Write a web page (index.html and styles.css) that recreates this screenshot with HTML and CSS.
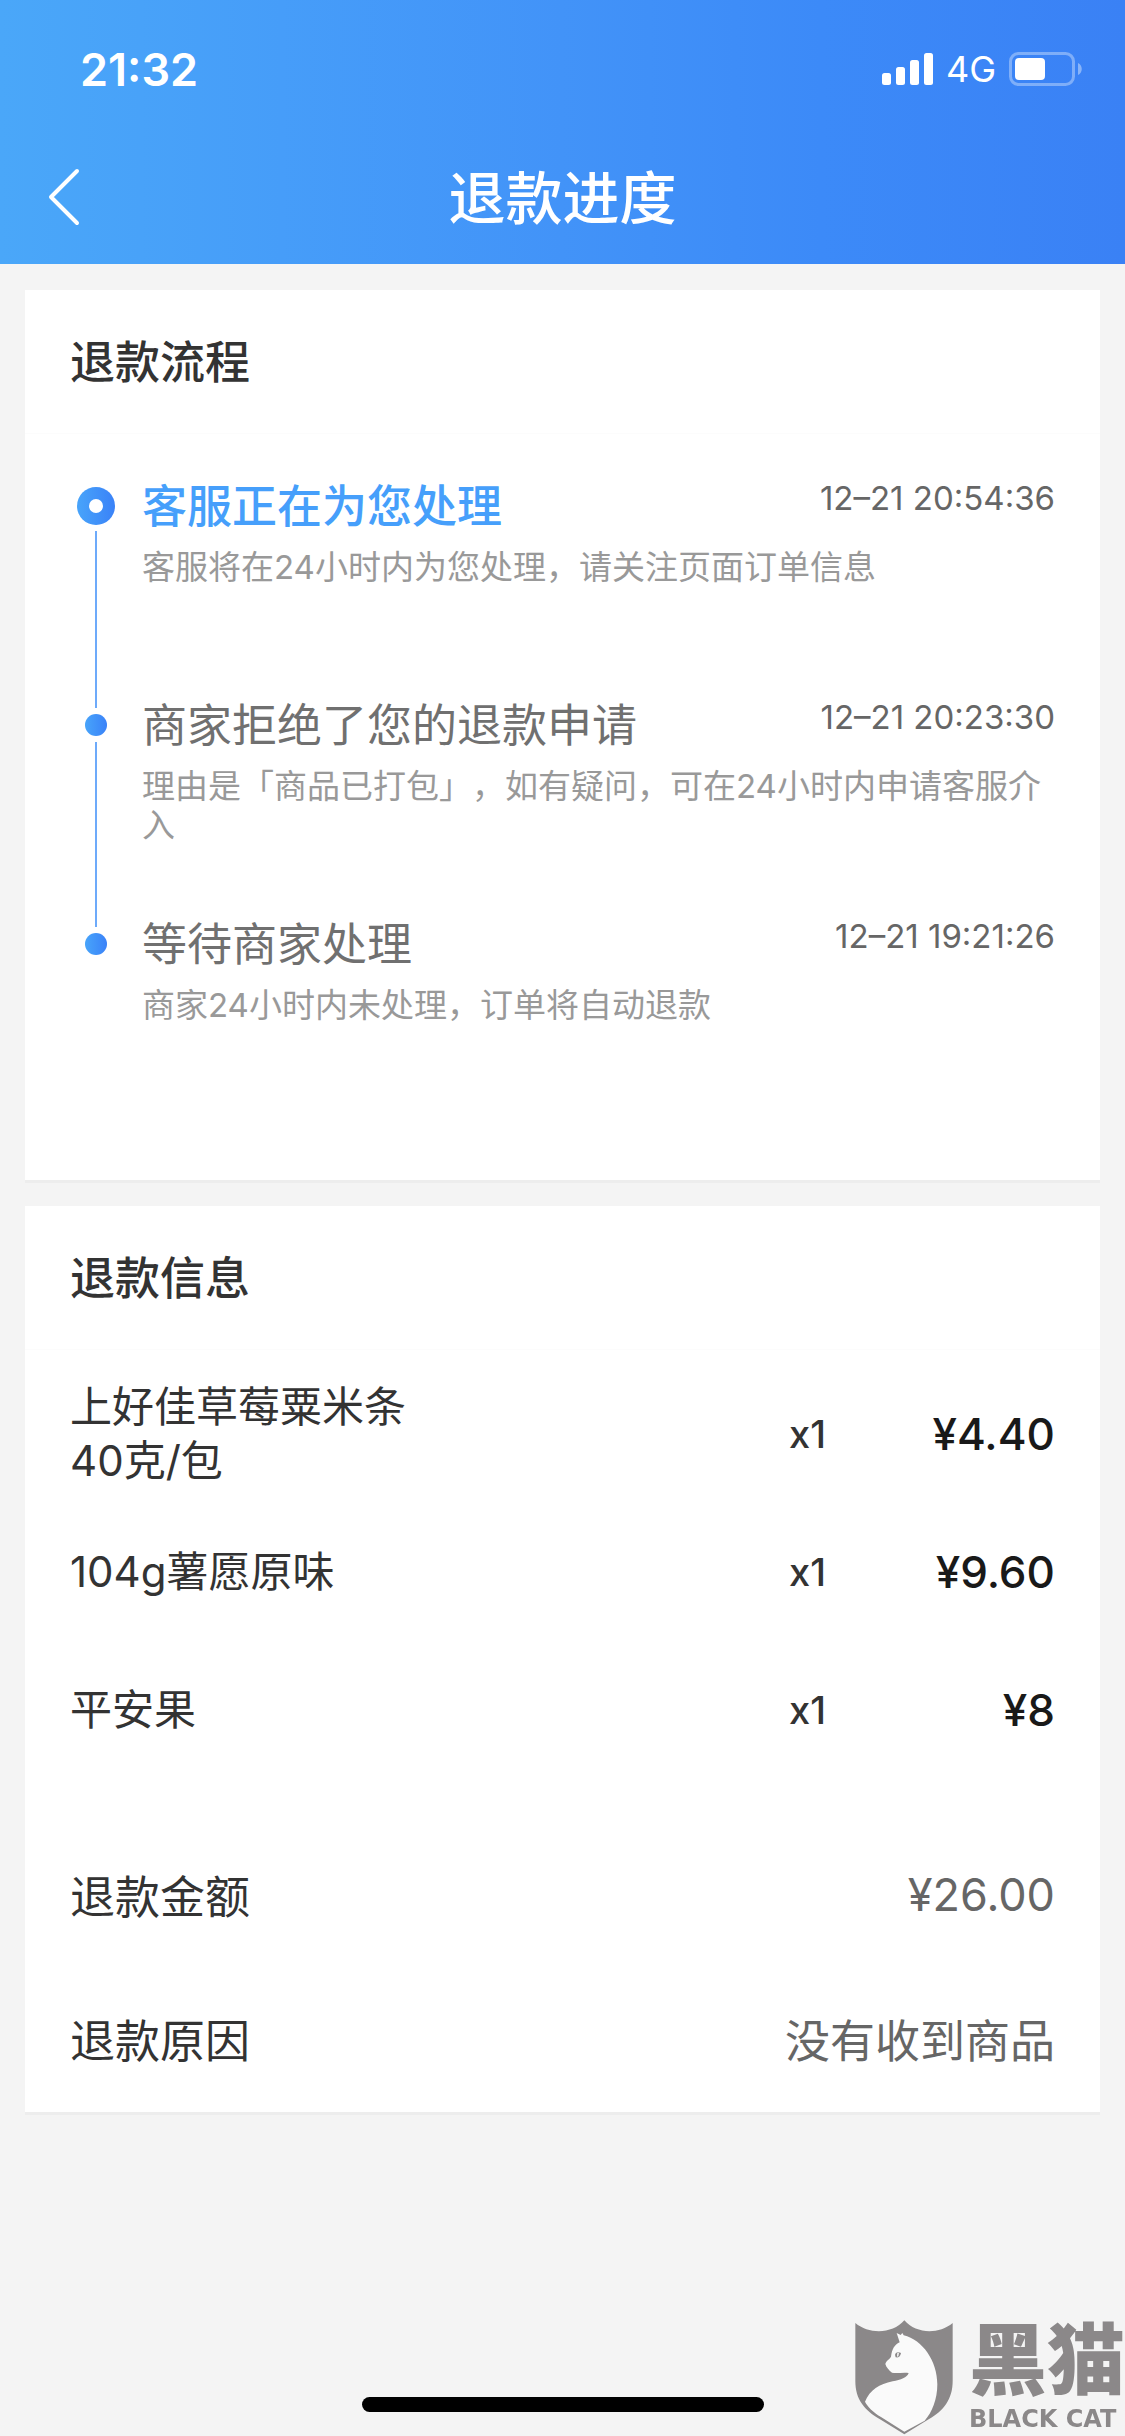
FILE: index.html
```html
<!DOCTYPE html>
<html lang="zh-CN">
<head>
    <meta charset="UTF-8">
    <meta name="viewport" content="width=device-width, initial-scale=1.0">
    <title>退款进度</title>
    <link rel="stylesheet" href="styles.css">
</head>
<body>

    <!-- 顶部 -->
    <header class="header">
        <div class="status-bar">
            <span class="status-time">21:32</span>
            <div class="status-icons">
                <svg class="signal" width="51" height="32" viewBox="0 0 51 32" fill="#fff">
                    <rect x="0" y="20" width="9" height="12" rx="2.5"/>
                    <rect x="14" y="14" width="9" height="18" rx="2.5"/>
                    <rect x="28" y="7" width="9" height="25" rx="2.5"/>
                    <rect x="42" y="0" width="9" height="32" rx="2.5"/>
                </svg>
                <span class="network">4G</span>
                <svg class="battery" width="74" height="34" viewBox="0 0 74 34">
                    <rect x="1.5" y="1.5" width="63" height="31" rx="8" fill="none" stroke="#fff" stroke-opacity="0.35" stroke-width="3"/>
                    <rect x="6" y="6" width="30" height="22" rx="4" fill="#fff"/>
                    <path d="M69 11c5 2 5 10 0 12z" fill="#fff" fill-opacity="0.4"/>
                </svg>
            </div>
        </div>
        <div class="nav-bar">
            <button class="back-btn" type="button" aria-label="返回">
                <svg width="32" height="58" viewBox="0 0 32 58" fill="none" stroke="#fff" stroke-width="4" stroke-linecap="round" stroke-linejoin="round">
                    <path d="M29 3L3 29l26 26"/>
                </svg>
            </button>
            <h1 class="nav-title">退款进度</h1>
        </div>
    </header>

    <main class="content">
        <!-- 退款流程 -->
        <section class="card">
            <h2 class="card-title">退款流程</h2>
            <ol class="timeline">
                <li class="step active">
                    <div class="marker"><i class="dot"></i><i class="line"></i></div>
                    <div class="step-body">
                        <div class="step-head">
                            <h3 class="step-title">客服正在为您处理</h3>
                            <time class="step-time">12–21 20:54:36</time>
                        </div>
                        <p class="step-desc">客服将在24小时内为您处理，请关注页面订单信息</p>
                    </div>
                </li>
                <li class="step">
                    <div class="marker"><i class="dot"></i><i class="line"></i></div>
                    <div class="step-body">
                        <div class="step-head">
                            <h3 class="step-title">商家拒绝了您的退款申请</h3>
                            <time class="step-time">12–21 20:23:30</time>
                        </div>
                        <p class="step-desc">理由是「商品已打包」，如有疑问，可在24小时内申请客服介入</p>
                    </div>
                </li>
                <li class="step">
                    <div class="marker"><i class="dot"></i></div>
                    <div class="step-body">
                        <div class="step-head">
                            <h3 class="step-title">等待商家处理</h3>
                            <time class="step-time">12–21 19:21:26</time>
                        </div>
                        <p class="step-desc">商家24小时内未处理，订单将自动退款</p>
                    </div>
                </li>
            </ol>
        </section>

        <!-- 退款信息 -->
        <section class="card">
            <h2 class="card-title">退款信息</h2>
            <div class="goods">
                <table class="goods-table">
                    <tr>
                        <td><div class="goods-name">上好佳草莓粟米条40克/包</div></td>
                        <td class="goods-count">x1</td>
                        <td class="goods-price">¥4.40</td>
                    </tr>
                    <tr>
                        <td><div class="goods-name">104g薯愿原味</div></td>
                        <td class="goods-count">x1</td>
                        <td class="goods-price">¥9.60</td>
                    </tr>
                    <tr>
                        <td><div class="goods-name">平安果</div></td>
                        <td class="goods-count">x1</td>
                        <td class="goods-price">¥8</td>
                    </tr>
                </table>
            </div>
            <dl class="summary">
                <div class="summary-row">
                    <dt>退款金额</dt>
                    <dd>¥26.00</dd>
                </div>
                <div class="summary-row">
                    <dt>退款原因</dt>
                    <dd>没有收到商品</dd>
                </div>
            </dl>
        </section>
    </main>

    <!-- 底部横条 -->
    <div class="home-indicator"></div>

    <!-- 黑猫水印 -->
    <div class="watermark">
        <svg class="shield" width="98" height="115" viewBox="47 62 294 345">
            <path fill="#8b8889" d="M48 71C90 106 160 104 195 63C230 104 298 106 340 71V245C340 300 312 335 268 360L195 405L122 360C75 332 48 300 48 245z"/>
            <path fill="#fafafa" d="M172 101L184 107L189 101L193 108C250 122 294 185 294 255C294 300 278 340 256 364L195 397L125 353C100 338 85 322 77 307C92 272 120 254 160 246C185 241 203 235 208 221C190 219 170 223 158 220C148 212 141 204 138 194C140 184 150 181 155 172C158 150 165 136 181 129z"/>
            <path fill="#8b8889" d="M167 166C170 157 178 157 185 161C183 172 176 176 169 174z"/>
            <path fill="#fafafa" d="M174 161L179 160L177 171L173 172z"/>
        </svg>
        <div class="brand">
            <span class="brand-cn">黑猫</span>
            <span class="brand-en">BLACK CAT</span>
        </div>
    </div>

</body>
</html>
```

FILE: styles.css
```css
* {
    box-sizing: border-box;
}

body {
    margin: 0;
    min-height: 100vh;
    background-color: #f4f4f4;
    color: #333;
    font-family: Inter, "Noto Sans CJK SC", sans-serif;
    font-size: 45px;
    text-spacing-trim: space-all;
}

h1, h2, h3, p, ol, dl, dd {
    margin: 0;
    padding: 0;
}

/* 顶部 */
.header {
    padding-bottom: 8px;
    background: linear-gradient(to right, #4aa7f9, #469df9 25%, #4293f8 50%, #3c8af8 73%, #3a81f5);
    color: #fff;
}

.status-bar {
    display: flex;
    align-items: center;
    justify-content: space-between;
    height: 138px;
    padding: 0 42px 0 80px;
}

.status-time {
    font-weight: 600;
}

.status-icons {
    display: flex;
    align-items: center;
    gap: 13px;
}

.network {
    font-size: 36px;
}

.nav-bar {
    display: grid;
    grid-template-columns: 128px 1fr 128px;
    align-items: center;
    height: 118px;
}

.back-btn {
    display: flex;
    align-items: center;
    height: 100%;
    padding: 0 0 0 48px;
    border: none;
    background: none;
    cursor: pointer;
}

.nav-title {
    padding-top: 4px;
    font-size: 57px;
    font-weight: 500;
    line-height: 80px;
    text-align: center;
}

/* 卡片 */
.content {
    display: flex;
    flex-direction: column;
    gap: 23px;
    padding: 26px 25px 0;
}

.card {
    background-color: #fff;
    border-bottom: 3px solid #ededed;
}

.card-title {
    height: 144px;
    padding: 0 45px;
    border-bottom: 1px solid #fcfcfc;
    font-size: 45px;
    font-weight: 500;
    line-height: 146px;
}

/* 退款流程 */
.timeline {
    padding: 42px 45px 47px 52px;
    list-style: none;
}

.step {
    display: flex;
    gap: 27px;
    min-height: 219px;
}

.marker {
    display: flex;
    flex-direction: column;
    align-items: center;
    gap: 6px;
    width: 38px;
    margin-bottom: -13px;
    padding-top: 19px;
}

.dot {
    width: 22px;
    height: 22px;
    border-radius: 50%;
    background: linear-gradient(to right, #48a4fa, #3a82f8);
}

.line {
    flex: 1;
    width: 2px;
    background-color: #6daafa;
}

.active .marker {
    padding-top: 11px;
}

.active .dot {
    display: flex;
    align-items: center;
    justify-content: center;
    width: 38px;
    height: 38px;
}

.active .dot::after {
    content: '';
    width: 14px;
    height: 14px;
    border-radius: 50%;
    background-color: #fff;
}

.step-body {
    flex: 1;
}

.step-head {
    display: flex;
    align-items: flex-start;
    justify-content: space-between;
}

.step-title {
    color: #707070;
    font-size: 45px;
    font-weight: 400;
    line-height: 62px;
}

.active .step-title {
    color: #469ffb;
    font-weight: 500;
}

.step-time {
    color: #666;
    font-size: 33px;
    line-height: 44px;
}

.step-desc {
    margin-top: 10px;
    color: #999;
    font-size: 33px;
    line-height: 39px;
}

/* 退款信息 */
.goods {
    padding: 15px 45px 45px;
}

.goods-table {
    width: 100%;
    border-collapse: collapse;
}

.goods-table td {
    height: 138px;
    padding: 0;
}

.goods-name {
    max-width: 350px;
    font-size: 42px;
    line-height: 54px;
}

.goods-count {
    width: 40px;
    font-size: 38px;
    font-weight: 500;
}

.goods-price {
    width: 226px;
    color: #191919;
    font-size: 44px;
    font-weight: 500;
    text-align: right;
}

.summary-row {
    display: flex;
    align-items: center;
    justify-content: space-between;
    height: 144px;
    padding: 0 45px 3px;
}

.summary-row dd {
    color: #666;
}

/* 底部横条 */
.home-indicator {
    position: fixed;
    bottom: 24px;
    left: 50%;
    width: 402px;
    height: 15px;
    margin-left: -201px;
    border-radius: 8px;
    background-color: #000;
}

/* 水印 */
.watermark {
    position: fixed;
    right: 0;
    bottom: 0;
    display: flex;
    align-items: flex-start;
    gap: 16px;
    color: #8b8889;
}

.brand {
    display: flex;
    flex-direction: column;
}

.brand-cn {
    font-size: 78px;
    font-weight: 900;
    line-height: 82px;
}

.brand-en {
    font-family: "DejaVu Sans", sans-serif;
    font-size: 24px;
    font-weight: 700;
    line-height: 34px;
}
```
